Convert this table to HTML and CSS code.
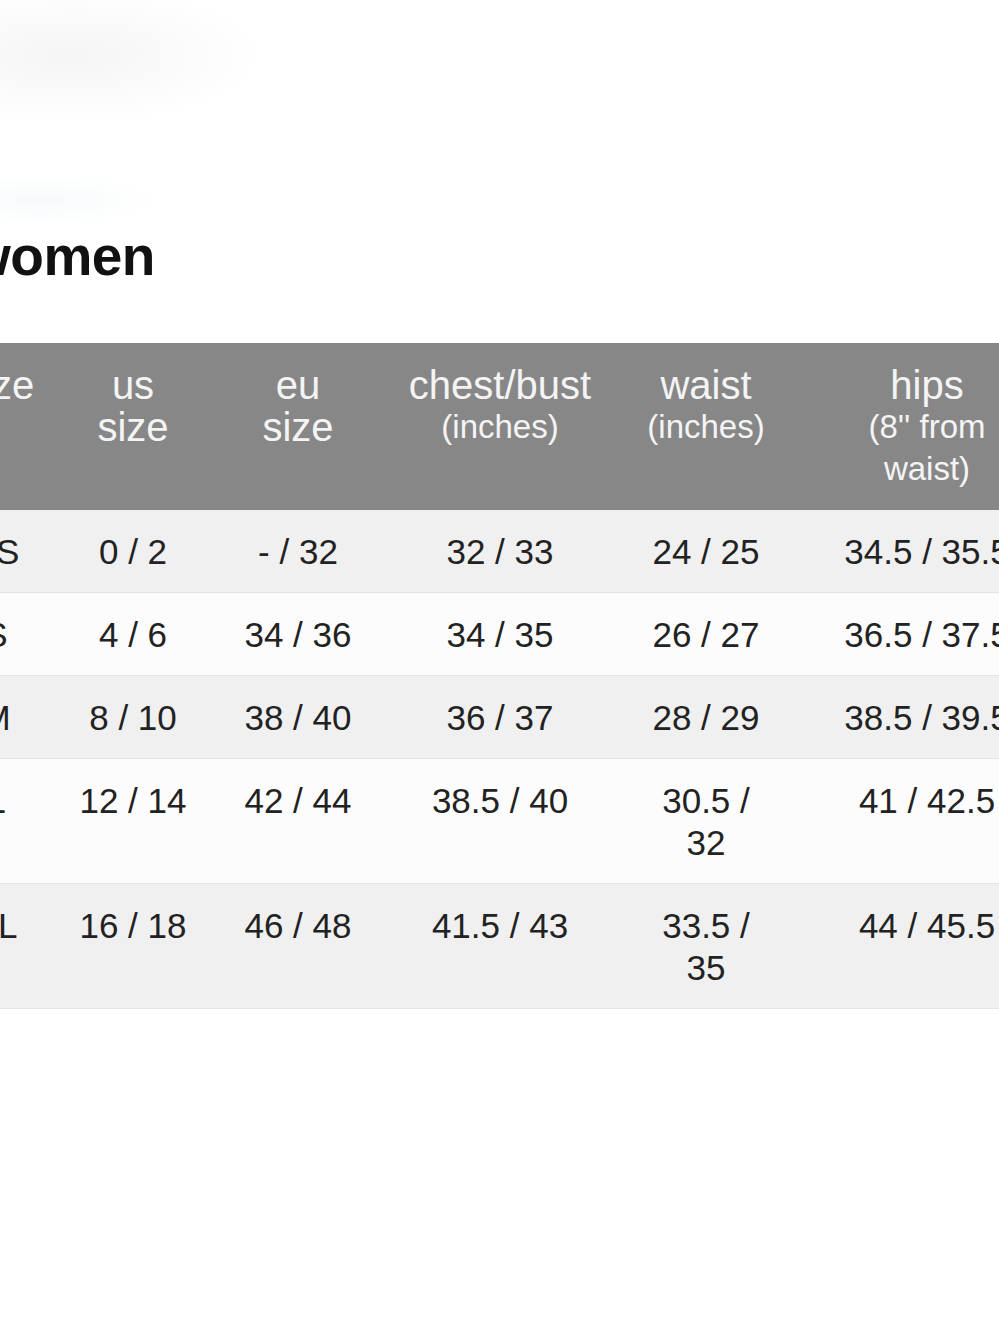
FILE: index.html
```html
<!DOCTYPE html>
<html lang="en">
<head>
<meta charset="utf-8">
<title>women size chart</title>
<link rel="stylesheet" href="styles.css">
</head>
<body>
<div class="page">
  <div class="top-haze"></div>
  <h1 class="title">women</h1>
  <table class="chart">
    <colgroup>
      <col class="c0"><col class="c1"><col class="c2"><col class="c3"><col class="c4"><col class="c5">
    </colgroup>
    <thead>
      <tr>
        <th>size</th>
        <th>us<br>size</th>
        <th>eu<br>size</th>
        <th>chest/bust<span class="sub">(inches)</span></th>
        <th>waist<span class="sub">(inches)</span></th>
        <th class="hips">hips<span class="sub">(8'' from waist)</span></th>
      </tr>
    </thead>
    <tbody>
      <tr class="shade"><td>XS</td><td>0 / 2</td><td>- / 32</td><td>32 / 33</td><td>24 / 25</td><td>34.5 / 35.5</td></tr>
      <tr class="plain"><td>S</td><td>4 / 6</td><td>34 / 36</td><td>34 / 35</td><td>26 / 27</td><td>36.5 / 37.5</td></tr>
      <tr class="shade"><td>M</td><td>8 / 10</td><td>38 / 40</td><td>36 / 37</td><td>28 / 29</td><td>38.5 / 39.5</td></tr>
      <tr class="plain"><td>L</td><td>12 / 14</td><td>42 / 44</td><td>38.5 / 40</td><td>30.5 / 32</td><td>41 / 42.5</td></tr>
      <tr class="shade"><td>XL</td><td>16 / 18</td><td>46 / 48</td><td>41.5 / 43</td><td>33.5 / 35</td><td>44 / 45.5</td></tr>
    </tbody>
  </table>
</div>
</body>
</html>
```

FILE: styles.css
```css
html, body {
  margin: 0;
  padding: 0;
  background: #ffffff;
}

body {
  overflow: hidden;
  font-family: "Liberation Sans", Arial, sans-serif;
}

.page {
  width: 999px;
  height: 1333px;
  overflow: hidden;
  background: #ffffff;
}

.top-haze {
  height: 225px;
  background:
    radial-gradient(ellipse 190px 70px at 70px 55px, rgba(232,232,232,0.45), rgba(255,255,255,0) 100%),
    radial-gradient(ellipse 120px 25px at 40px 200px, rgba(228,238,242,0.3), rgba(255,255,255,0) 100%);
}

.title {
  margin: 0 0 55px -32px;
  font-size: 55px;
  line-height: 63px;
  font-weight: 700;
  color: #111111;
  letter-spacing: -0.5px;
}

.chart {
  margin-left: -57px;
  border-collapse: collapse;
  table-layout: fixed;
  width: 1120px;
}

.c0 { width: 106px; }
.c1 { width: 168px; }
.c2 { width: 162px; }
.c3 { width: 242px; }
.c4 { width: 170px; }
.c5 { width: 272px; }

.chart th,
.chart td {
  padding: 0 20px;
  text-align: center;
  vertical-align: top;
}

.chart thead tr {
  background: #878787;
}

.chart th {
  padding-top: 21px;
  padding-bottom: 20px;
  height: 126px;
  font-weight: 400;
  font-size: 40px;
  line-height: 42px;
  color: #f4f4f4;
}

.chart th.hips {
  padding-left: 48px;
  padding-right: 48px;
}

.chart th .sub {
  display: block;
  font-size: 33px;
  line-height: 42px;
}

.chart td {
  padding-top: 21px;
  padding-bottom: 19px;
  font-size: 35px;
  line-height: 42px;
  color: #222222;
}

.chart tbody tr {
  border-bottom: 1px solid #e4e4e4;
}

.shade { background: #f0f0f0; }
.plain { background: #fcfcfc; }
```
